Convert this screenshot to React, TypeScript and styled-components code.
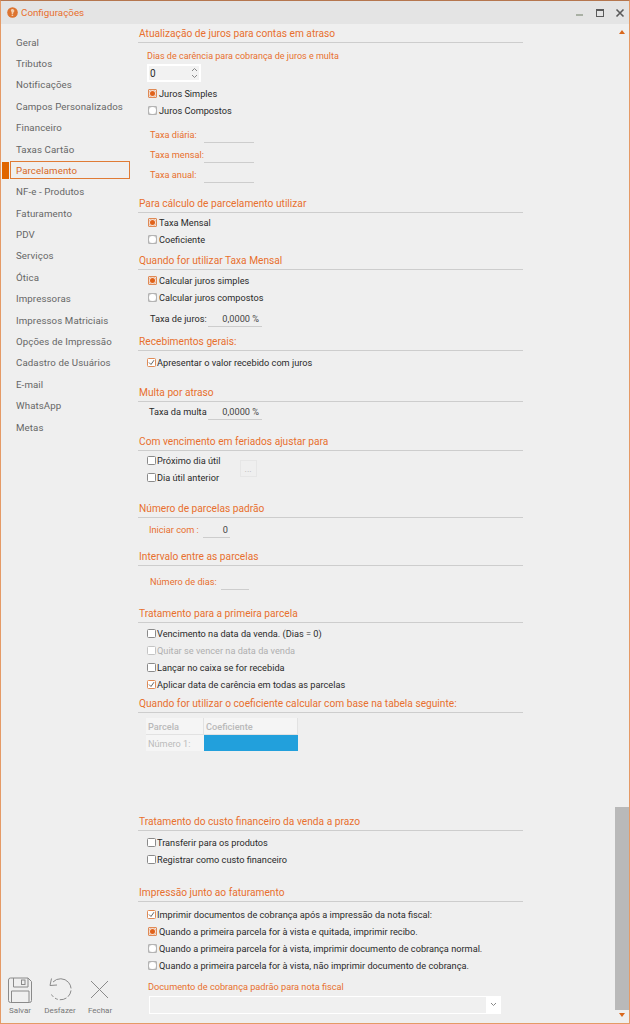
import React from 'react';
import styled, { createGlobalStyle } from 'styled-components';

const ORANGE = '#e8702e';
const LINE = '#cdcdcd';
const FONT = 'Roboto, "Noto Sans", sans-serif';

const GlobalStyle = createGlobalStyle`
  html, body { margin: 0; padding: 0; background: #efefef; }
  * { box-sizing: border-box; }
`;

const SWindow = styled.div`
  width: 630px;
  height: 1024px;
  display: flex;
  flex-direction: column;
  background: #efefef;
  border: 1px solid #e59a66;
  border-top-color: #b5764e;
  font-family: ${FONT};
  font-size: 9.2px;
  color: #2a2a2a;
  overflow: hidden;
`;

const STitleBar = styled.div`
  height: 23px;
  flex: none;
  display: flex;
  align-items: center;
  padding-left: 6px;
  background: #e4e4e4;
`;

const STitle = styled.span`
  margin-left: 3px;
  color: ${ORANGE};
  font-size: 9.8px;
`;

const SControls = styled.div`
  margin-left: auto;
  display: flex;
  align-items: center;
  gap: 10px;
  padding-right: 4px;
`;

const SBody = styled.div`
  flex: 1;
  min-height: 0;
  display: flex;
`;

const SSidebar = styled.div`
  width: 137px;
  flex: none;
  display: flex;
  flex-direction: column;
  justify-content: space-between;
  padding-top: 7.4px;
`;

const SNavRow = styled.div`
  height: 21.4px;
  display: flex;
  align-items: center;
`;

const SMarker = styled.div<{ $on: boolean }>`
  width: 7px;
  height: 17px;
  margin: 0 1px 0 1px;
  background: ${({ $on }) => ($on ? '#e06500' : 'transparent')};
`;

const SNavItem = styled.div<{ $on: boolean }>`
  width: 120px;
  height: 18px;
  display: flex;
  align-items: center;
  padding-left: 5px;
  font-size: 9.7px;
  letter-spacing: 0.1px;
  white-space: nowrap;
  color: ${({ $on }) => ($on ? '#d9681d' : '#666')};
  border: 1px solid ${({ $on }) => ($on ? '#e07b35' : 'transparent')};
`;

const SToolbar = styled.div`
  display: flex;
  padding: 0 0 8px 6px;
`;

const STool = styled.div<{ $w: number }>`
  width: ${({ $w }) => $w}px;
  display: flex;
  flex-direction: column;
  align-items: center;
  gap: 3px;
  font-size: 8px;
  color: #777;
`;

const SMain = styled.div`
  width: 476px;
  flex: none;
`;

const SColumn = styled.div`
  width: 385px;
`;

const SHeading = styled.div<{ $mt?: number }>`
  height: 19px;
  margin-top: ${({ $mt }) => $mt ?? 0}px;
  padding-left: 1px;
  line-height: 19px;
  font-size: 10.2px;
  color: ${ORANGE};
  border-bottom: 1px solid ${LINE};
  white-space: nowrap;
`;

const SStack = styled.div<{ $mt?: number; $x?: number }>`
  margin-top: ${({ $mt }) => $mt ?? 0}px;
  padding-left: ${({ $x }) => $x ?? 9}px;
  display: flex;
  flex-direction: column;
`;

const SRow = styled.div<{ $gap?: number; $muted?: boolean }>`
  height: 17px;
  display: flex;
  align-items: center;
  gap: ${({ $gap }) => $gap ?? 1}px;
  color: ${({ $muted }) => ($muted ? '#b0b0b0' : '#2a2a2a')};
  white-space: nowrap;
`;

const SBox = styled.span<{ $on?: boolean; $muted?: boolean }>`
  width: 9px;
  height: 9px;
  flex: none;
  display: inline-flex;
  align-items: center;
  justify-content: center;
  background: #fff;
  border: 1px solid ${({ $on, $muted }) => ($on ? '#e08a55' : $muted ? '#c4c4c4' : '#8a8a8a')};
  border-radius: 1.5px;
`;

const SRadioBox = styled.span<{ $on?: boolean }>`
  width: 9px;
  height: 9px;
  margin-left: 1px;
  flex: none;
  display: inline-flex;
  align-items: center;
  justify-content: center;
  background: ${({ $on }) => ($on ? '#e9e9e9' : '#c9c9c9')};
  border: 1px solid ${({ $on }) => ($on ? '#e08a55' : '#b4b4b4')};
  border-radius: 1px;
`;

const SRadioFace = styled.span<{ $on?: boolean }>`
  width: 7px;
  height: 7px;
  flex: none;
  display: flex;
  align-items: center;
  justify-content: center;
  border-radius: 50%;
  background: ${({ $on }) => ($on ? '#e0621a' : '#fff')};
  box-shadow: ${({ $on }) => ($on ? 'inset 0 0 0 1px #f6e4d8' : 'none')};
`;

const SFieldLabel = styled.span<{ $w: number; $orange?: boolean }>`
  width: ${({ $w }) => $w}px;
  flex: none;
  color: ${({ $orange }) => ($orange ? ORANGE : '#2a2a2a')};
`;

const SFieldRow = styled.div<{ $mt?: number; $x?: number }>`
  height: 17px;
  margin-top: ${({ $mt }) => $mt ?? 0}px;
  padding-left: ${({ $x }) => $x ?? 12}px;
  display: flex;
  align-items: center;
  white-space: nowrap;
`;

const SFieldValue = styled.span<{ $w: number; $pr?: number }>`
  width: ${({ $w }) => $w}px;
  height: 17px;
  padding-right: ${({ $pr }) => $pr ?? 2}px;
  display: flex;
  align-items: center;
  justify-content: flex-end;
  border-bottom: 1px solid ${LINE};
  color: #444;
`;

const SCaption = styled.div<{ $mt?: number; $x?: number; $size?: number }>`
  height: 17px;
  margin-top: ${({ $mt }) => $mt ?? 0}px;
  padding-left: ${({ $x }) => $x ?? 9}px;
  display: flex;
  align-items: center;
  color: ${ORANGE};
  font-size: ${({ $size }) => $size ?? 9}px;
  white-space: nowrap;
`;

const SSpin = styled.div`
  width: 54px;
  height: 18px;
  margin-left: 9px;
  padding: 0 2px 0 2px;
  display: flex;
  align-items: center;
  justify-content: space-between;
  background: #f2f2f2;
  border: 1px solid #fff;
  font-size: 10px;
  box-shadow: 0 0 0 1px #fff inset;
`;

const SHolidayGrid = styled.div`
  margin-top: 1px;
  padding-left: 9px;
  display: flex;
  gap: 19px;
`;

const SDots = styled.div`
  width: 17px;
  height: 17px;
  margin-top: 8px;
  display: flex;
  align-items: center;
  justify-content: center;
  color: #b5b5b5;
  font-size: 9px;
  border: 1px solid #e6e6e6;
`;

const STable = styled.div`
  width: 152px;
  margin: 5px 0 0 8px;
  display: grid;
  grid-template-columns: 58px 94px;
  grid-template-rows: 17px 16px;
  color: #bbb;
`;

const SHeadCell = styled.div`
  padding-left: 2px;
  display: flex;
  align-items: center;
  font-weight: 500;
  color: #b9b9b9;
  background: #f5f5f5;
  border-right: 1px solid #e2e2e2;
  border-bottom: 1px solid #e2e2e2;
`;

const SCell = styled.div<{ $fill?: boolean }>`
  padding-left: 2px;
  display: flex;
  align-items: center;
  background: ${({ $fill }) => ($fill ? '#22a0dc' : '#f5f5f5')};
`;

const SSelect = styled.div`
  width: 352px;
  height: 18px;
  margin: 1px 0 0 11px;
  display: flex;
  justify-content: flex-end;
  align-items: center;
  padding-right: 5px;
  background: #f0f0f0;
  border: 1px solid #fff;
  border-right-width: 15px;
  position: relative;
`;

const SChevron = styled.svg`
  position: absolute;
  right: -11px;
  top: 5px;
`;

const SScrollbar = styled.div`
  width: 15px;
  flex: none;
  display: flex;
  flex-direction: column;
  align-items: center;
  padding-top: 6px;
`;

const SThumb = styled.div`
  width: 14px;
  height: 203px;
  margin: auto 0 3px 0;
  background: #b9b9b9;
`;

const SArrow = styled.div<{ $down?: boolean }>`
  width: 0;
  height: 0;
  margin-bottom: ${({ $down }) => ($down ? 6 : 0)}px;
  border-left: 3.5px solid transparent;
  border-right: 3.5px solid transparent;
  border-bottom: ${({ $down }) => ($down ? '0' : '4px solid #d9681d')};
  border-top: ${({ $down }) => ($down ? '4px solid #d9681d' : '0')};
`;

const CheckMark = () => (
  <svg width="7" height="7" viewBox="0 0 7 7">
    <path d="M1 3.5 L3 5.5 L6 1.2" fill="none" stroke="#666" strokeWidth="1" />
  </svg>
);

const Check = ({ label, on, muted }: { label: string; on?: boolean; muted?: boolean }) => (
  <SRow $muted={muted}>
    <SBox $on={on} $muted={muted}>{on && <CheckMark />}</SBox>
    {label}
  </SRow>
);

const Radio = ({ label, on }: { label: string; on?: boolean }) => (
  <SRow $gap={2}>
    <SRadioBox $on={on}><SRadioFace $on={on} /></SRadioBox>
    {label}
  </SRow>
);

const NAV = [
  'Geral', 'Tributos', 'Notificações', 'Campos Personalizados', 'Financeiro', 'Taxas Cartão',
  'Parcelamento', 'NF-e - Produtos', 'Faturamento', 'PDV', 'Serviços', 'Ótica', 'Impressoras',
  'Impressos Matriciais', 'Opções de Impressão', 'Cadastro de Usuários', 'E-mail', 'WhatsApp', 'Metas',
];

const SaveIcon = () => (
  <svg width="24" height="26" viewBox="0 0 24 26" fill="none" stroke="#8a8a8a" strokeWidth="1">
    <path d="M0.5 3 a2 2 0 0 1 2 -2 H20 L23.5 4.5 V23.5 a2 2 0 0 1 -2 2 H2.5 a2 2 0 0 1 -2 -2 Z" />
    <path d="M5.5 1 V10 H20 V1" />
    <rect x="13.5" y="3" width="3.5" height="4.5" />
    <path d="M3.5 25.5 V14 H21 V25.5" />
  </svg>
);

const UndoIcon = () => (
  <svg width="26" height="26" viewBox="0 0 26 26" fill="none" stroke="#8a8a8a" strokeWidth="1">
    <path d="M6 5 A10.5 10.5 0 1 1 4.5 17.5" strokeDasharray="24 2 7 2 7 2 3 2" />
    <path d="M4.5 1.5 L3 8.5 L10 8" />
  </svg>
);

const CloseIcon = () => (
  <svg width="24" height="26" viewBox="0 0 24 26" fill="none" stroke="#8a8a8a" strokeWidth="1">
    <path d="M3 4 L20 21 M20 4 L3 21" />
  </svg>
);

const AppIcon = () => (
  <svg width="11" height="11" viewBox="0 0 11 11">
    <circle cx="5.5" cy="5.5" r="5.3" fill="#dd7430" />
    <path d="M3.8 3.4 a1.8 1.8 0 1 1 2.6 2 L6 7.2 H4.8 L4.6 5.2 Z" fill="#f3cfb0" />
    <rect x="4.6" y="7.8" width="1.6" height="1.2" fill="#f3cfb0" />
  </svg>
);

const WindowControls = () => (
  <SControls>
    <svg width="10" height="10" viewBox="0 0 10 10"><rect x="1" y="6" width="7" height="2" fill="#a9b0a4" /></svg>
    <svg width="10" height="10" viewBox="0 0 10 10" fill="none"><rect x="1.5" y="1.5" width="7" height="7" stroke="#5a5a5a" /><rect x="1" y="1" width="8" height="2" fill="#5a5a5a" /></svg>
    <svg width="10" height="10" viewBox="0 0 10 10"><path d="M1.5 1.5 L8.5 8.5 M8.5 1.5 L1.5 8.5" stroke="#5a5a5a" strokeWidth="1.6" /></svg>
  </SControls>
);

export default function App() {
  return (
    <>
      <GlobalStyle />
      <SWindow>
        <STitleBar>
          <AppIcon />
          <STitle>Configurações</STitle>
          <WindowControls />
        </STitleBar>
        <SBody>
          <SSidebar>
            <div>
              {NAV.map((name) => (
                <SNavRow key={name}>
                  <SMarker $on={name === 'Parcelamento'} />
                  <SNavItem $on={name === 'Parcelamento'}>{name}</SNavItem>
                </SNavRow>
              ))}
            </div>
            <SToolbar>
              <STool $w={26}><SaveIcon />Salvar</STool>
              <STool $w={54}><UndoIcon />Desfazer</STool>
              <STool $w={26}><CloseIcon />Fechar</STool>
            </SToolbar>
          </SSidebar>
          <SMain>
            <SColumn>
              <SHeading>Atualização de juros para contas em atraso</SHeading>
              <SCaption $mt={4}>Dias de carência para cobrança de juros e multa</SCaption>
              <SSpin>
                0
                <svg width="7" height="12" viewBox="0 0 7 12" fill="none" stroke="#888"><path d="M1 4 L3.5 1.5 L6 4 M1 8 L3.5 10.5 L6 8" /></svg>
              </SSpin>
              <SStack $mt={3}>
                <Radio on label="Juros Simples" />
                <Radio label="Juros Compostos" />
              </SStack>
              <SFieldRow $mt={7}><SFieldLabel $w={54} $orange>Taxa diária:</SFieldLabel><SFieldValue $w={50} /></SFieldRow>
              <SFieldRow $mt={3}><SFieldLabel $w={54} $orange>Taxa mensal:</SFieldLabel><SFieldValue $w={50} /></SFieldRow>
              <SFieldRow $mt={3}><SFieldLabel $w={54} $orange>Taxa anual:</SFieldLabel><SFieldValue $w={50} /></SFieldRow>

              <SHeading $mt={11}>Para cálculo de parcelamento utilizar</SHeading>
              <SStack $mt={1}>
                <Radio on label="Taxa Mensal" />
                <Radio label="Coeficiente" />
              </SStack>

              <SHeading $mt={3}>Quando for utilizar Taxa Mensal</SHeading>
              <SStack $mt={2}>
                <Radio on label="Calcular juros simples" />
                <Radio label="Calcular juros compostos" />
              </SStack>
              <SFieldRow $mt={4}><SFieldLabel $w={58}>Taxa de juros:</SFieldLabel><SFieldValue $w={54} $pr={3}>0,0000 %</SFieldValue></SFieldRow>

              <SHeading $mt={5}>Recebimentos gerais:</SHeading>
              <SStack $mt={3}>
                <Check on label="Apresentar o valor recebido com juros" />
              </SStack>

              <SHeading $mt={12}>Multa por atraso</SHeading>
              <SFieldRow $mt={1} $x={11}><SFieldLabel $w={59}>Taxa da multa</SFieldLabel><SFieldValue $w={54} $pr={3}>0,0000 %</SFieldValue></SFieldRow>

              <SHeading $mt={12}>Com vencimento em feriados ajustar para</SHeading>
              <SHolidayGrid>
                <SStack $x={0}>
                  <Check label="Próximo dia útil" />
                  <Check label="Dia útil anterior" />
                </SStack>
                <SDots>...</SDots>
              </SHolidayGrid>

              <SHeading $mt={13}>Número de parcelas padrão</SHeading>
              <SFieldRow $mt={3} $x={11}><SFieldLabel $w={54} $orange>Iniciar com :</SFieldLabel><SFieldValue $w={27}>0</SFieldValue></SFieldRow>

              <SHeading $mt={9}>Intervalo entre as parcelas</SHeading>
              <SFieldRow $mt={7}><SFieldLabel $w={71} $orange>Número de dias:</SFieldLabel><SFieldValue $w={28} /></SFieldRow>

              <SHeading $mt={14}>Tratamento para a primeira parcela</SHeading>
              <SStack $mt={2}>
                <Check label="Vencimento na data da venda. (Dias = 0)" />
                <Check muted label="Quitar se vencer na data da venda" />
                <Check label="Lançar no caixa se for recebida" />
                <Check on label="Aplicar data de carência em todas as parcelas" />
              </SStack>

              <SHeading $mt={1}>Quando for utilizar o coeficiente calcular com base na tabela seguinte:</SHeading>
              <STable>
                <SHeadCell>Parcela</SHeadCell>
                <SHeadCell>Coeficiente</SHeadCell>
                <SCell>Número 1:</SCell>
                <SCell $fill />
              </STable>

              <SHeading $mt={61}>Tratamento do custo financeiro da venda a prazo</SHeading>
              <SStack $mt={3}>
                <Check label="Transferir para os produtos" />
                <Check label="Registrar como custo financeiro" />
              </SStack>

              <SHeading $mt={15}>Impressão junto ao faturamento</SHeading>
              <SStack $mt={4}>
                <Check on label="Imprimir documentos de cobrança após a impressão da nota fiscal:" />
                <Radio on label="Quando a primeira parcela for à vista e quitada, imprimir recibo." />
                <Radio label="Quando a primeira parcela for à vista, imprimir documento de cobrança normal." />
                <Radio label="Quando a primeira parcela for à vista, não imprimir documento de cobrança." />
              </SStack>
              <SCaption $mt={4} $x={10} $size={9.2}>Documento de cobrança padrão para nota fiscal</SCaption>
              <SSelect>
                <SChevron width="7" height="5" viewBox="0 0 7 5" fill="none" stroke="#888"><path d="M1 1 L3.5 3.5 L6 1" /></SChevron>
              </SSelect>
            </SColumn>
          </SMain>
          <SScrollbar>
            <SArrow />
            <SThumb />
            <SArrow $down />
          </SScrollbar>
        </SBody>
      </SWindow>
    </>
  );
}
